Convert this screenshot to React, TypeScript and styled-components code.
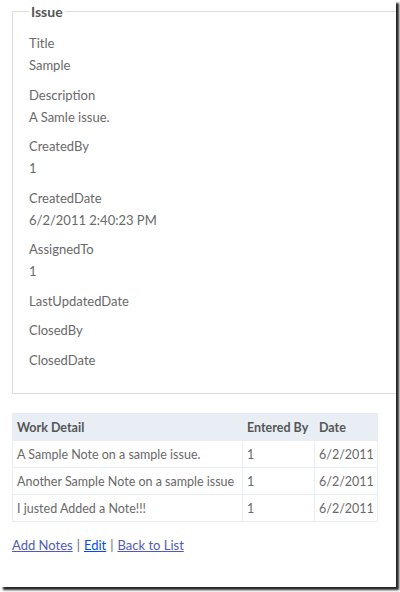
import React from "react";
import styled, { createGlobalStyle } from "styled-components";

const GlobalStyle = createGlobalStyle`
  html, body {
    margin: 0;
    padding: 0;
    background: #fff;
  }
  body {
    font-family: "Lato", "Open Sans", sans-serif;
    font-size: 13px;
    color: #696969;
  }
`;

const Frame = styled.div`
  width: 400px;
  height: 592px;
  overflow: hidden;
  background: #fff;
`;

const Screen = styled.div`
  width: 396px;
  height: 587px;
  background: #fff;
  overflow: hidden;
  box-shadow: 3px 3px 2px rgba(0, 0, 0, 0.85);
  padding: 3px 0 0 12px;
  box-sizing: border-box;
`;

const Fieldset = styled.fieldset`
  width: 420px;
  margin: 0;
  padding: 12px 16px 15px 16px;
  border: 1px solid #ddd;
  box-sizing: border-box;
`;

const Legend = styled.legend`
  font-size: 14px;
  font-weight: 700;
  color: #555;
  padding: 0 2px;
  margin-left: 0;
`;

const Label = styled.div`
  line-height: 22px;
`;

const Value = styled.div`
  line-height: 22px;
  margin-bottom: 7.5px;
`;

const Table = styled.table`
  margin-top: 19px;
  width: 365px;
  table-layout: fixed;
  border-collapse: collapse;
  border: 1px solid #e8eef4;
  font-size: 12.5px;
`;

const Col = styled.col<{ $w: number }>`
  width: ${(p) => p.$w}px;
`;

const Th = styled.th`
  background: #e8eef4;
  text-align: left;
  font-weight: 700;
  padding: 5px 4px;
  height: 16px;
  border: 1px solid #e8eef4;
  color: #555;
  white-space: nowrap;
`;

const Td = styled.td`
  padding: 5px 4px;
  height: 16px;
  border: 1px solid #e8eef4;
  white-space: nowrap;
  overflow: hidden;
`;

const Links = styled.div`
  margin-top: 13px;
  line-height: 20px;
`;

const Link = styled.a<{ $visited?: boolean }>`
  color: ${(p) => (p.$visited ? "#505abc" : "#034af3")};
  text-decoration: underline;
`;

const Sep = styled.span`
  margin: 0 4px;
`;

const fields: [string, string][] = [
  ["Title", "Sample"],
  ["Description", "A Samle issue."],
  ["CreatedBy", "1"],
  ["CreatedDate", "6/2/2011 2:40:23 PM"],
  ["AssignedTo", "1"],
  ["LastUpdatedDate", ""],
  ["ClosedBy", ""],
  ["ClosedDate", ""],
];

const notes = [
  "A Sample Note on a sample issue.",
  "Another Sample Note on a sample issue",
  "I justed Added a Note!!!",
];

export default function App() {
  return (
    <Frame>
      <GlobalStyle />
      <Screen>
        <Fieldset>
          <Legend>Issue</Legend>
          {fields.map(([label, value]) => (
            <React.Fragment key={label}>
              <Label>{label}</Label>
              <Value>{value}</Value>
            </React.Fragment>
          ))}
        </Fieldset>
        <Table>
          <colgroup>
            <Col $w={230} />
            <Col $w={72} />
            <Col $w={63} />
          </colgroup>
          <thead>
            <tr>
              <Th>Work Detail</Th>
              <Th>Entered By</Th>
              <Th>Date</Th>
            </tr>
          </thead>
          <tbody>
            {notes.map((note) => (
              <tr key={note}>
                <Td>{note}</Td>
                <Td>1</Td>
                <Td>6/2/2011</Td>
              </tr>
            ))}
          </tbody>
        </Table>
        <Links>
          <Link href="#" $visited>Add Notes</Link>
          <Sep>|</Sep>
          <Link href="#">Edit</Link>
          <Sep>|</Sep>
          <Link href="#" $visited>Back to List</Link>
        </Links>
      </Screen>
    </Frame>
  );
}
